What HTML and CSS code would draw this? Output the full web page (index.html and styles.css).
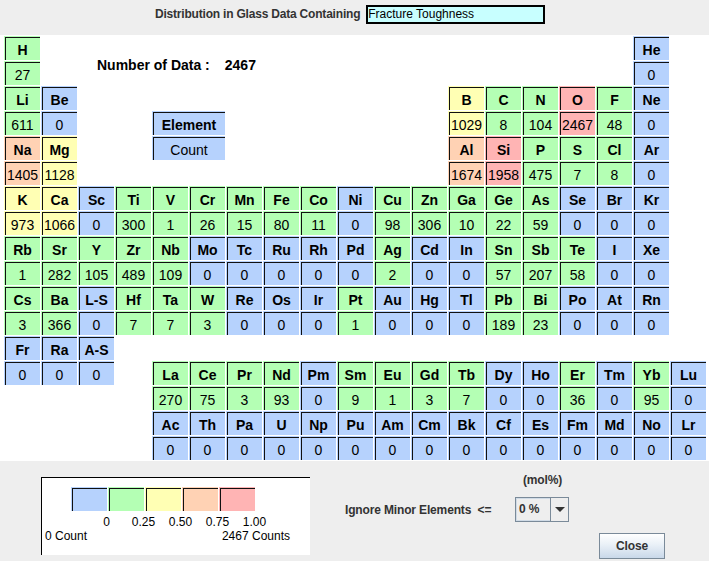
FILE: index.html
```html
<!DOCTYPE html>
<html>
<head>
<meta charset="utf-8">
<link rel="stylesheet" href="styles.css">
</head>
<body>
<div class="header">
  <span class="title">Distribution in Glass Data Containing</span>
  <div class="field">Fracture Toughness</div>
</div>

<div class="table">
  <div class="row">
    <div class="c el g">H</div>
    <div class="c el b at18">He</div>
  </div>
  <div class="row">
    <div class="c g">27</div>
    <div class="ndata">Number of Data :<span class="ndval">2467</span></div>
    <div class="c b at18">0</div>
  </div>
  <div class="row">
    <div class="c el g">Li</div>
    <div class="c el b">Be</div>
    <div class="c el y at13">B</div>
    <div class="c el g">C</div>
    <div class="c el g">N</div>
    <div class="c el r">O</div>
    <div class="c el g">F</div>
    <div class="c el b">Ne</div>
  </div>
  <div class="row">
    <div class="c g">611</div>
    <div class="c b">0</div>
    <div class="c el b key">Element</div>
    <div class="c y at13">1029</div>
    <div class="c g">8</div>
    <div class="c g">104</div>
    <div class="c r">2467</div>
    <div class="c g">48</div>
    <div class="c b">0</div>
  </div>
  <div class="row">
    <div class="c el o">Na</div>
    <div class="c el y">Mg</div>
    <div class="c b key">Count</div>
    <div class="c el o at13">Al</div>
    <div class="c el r">Si</div>
    <div class="c el g">P</div>
    <div class="c el g">S</div>
    <div class="c el g">Cl</div>
    <div class="c el b">Ar</div>
  </div>
  <div class="row">
    <div class="c o">1405</div>
    <div class="c y">1128</div>
    <div class="c o at13">1674</div>
    <div class="c r">1958</div>
    <div class="c g">475</div>
    <div class="c g">7</div>
    <div class="c g">8</div>
    <div class="c b">0</div>
  </div>
  <div class="row">
    <div class="c el y">K</div>
    <div class="c el y">Ca</div>
    <div class="c el b">Sc</div>
    <div class="c el g">Ti</div>
    <div class="c el g">V</div>
    <div class="c el g">Cr</div>
    <div class="c el g">Mn</div>
    <div class="c el g">Fe</div>
    <div class="c el g">Co</div>
    <div class="c el b">Ni</div>
    <div class="c el g">Cu</div>
    <div class="c el g">Zn</div>
    <div class="c el g">Ga</div>
    <div class="c el g">Ge</div>
    <div class="c el g">As</div>
    <div class="c el b">Se</div>
    <div class="c el b">Br</div>
    <div class="c el b">Kr</div>
  </div>
  <div class="row">
    <div class="c y">973</div>
    <div class="c y">1066</div>
    <div class="c b">0</div>
    <div class="c g">300</div>
    <div class="c g">1</div>
    <div class="c g">26</div>
    <div class="c g">15</div>
    <div class="c g">80</div>
    <div class="c g">11</div>
    <div class="c b">0</div>
    <div class="c g">98</div>
    <div class="c g">306</div>
    <div class="c g">10</div>
    <div class="c g">22</div>
    <div class="c g">59</div>
    <div class="c b">0</div>
    <div class="c b">0</div>
    <div class="c b">0</div>
  </div>
  <div class="row">
    <div class="c el g">Rb</div>
    <div class="c el g">Sr</div>
    <div class="c el g">Y</div>
    <div class="c el g">Zr</div>
    <div class="c el g">Nb</div>
    <div class="c el b">Mo</div>
    <div class="c el b">Tc</div>
    <div class="c el b">Ru</div>
    <div class="c el b">Rh</div>
    <div class="c el b">Pd</div>
    <div class="c el g">Ag</div>
    <div class="c el b">Cd</div>
    <div class="c el b">In</div>
    <div class="c el g">Sn</div>
    <div class="c el g">Sb</div>
    <div class="c el g">Te</div>
    <div class="c el b">I</div>
    <div class="c el b">Xe</div>
  </div>
  <div class="row">
    <div class="c g">1</div>
    <div class="c g">282</div>
    <div class="c g">105</div>
    <div class="c g">489</div>
    <div class="c g">109</div>
    <div class="c b">0</div>
    <div class="c b">0</div>
    <div class="c b">0</div>
    <div class="c b">0</div>
    <div class="c b">0</div>
    <div class="c g">2</div>
    <div class="c b">0</div>
    <div class="c b">0</div>
    <div class="c g">57</div>
    <div class="c g">207</div>
    <div class="c g">58</div>
    <div class="c b">0</div>
    <div class="c b">0</div>
  </div>
  <div class="row">
    <div class="c el g">Cs</div>
    <div class="c el g">Ba</div>
    <div class="c el b">L-S</div>
    <div class="c el g">Hf</div>
    <div class="c el g">Ta</div>
    <div class="c el g">W</div>
    <div class="c el b">Re</div>
    <div class="c el b">Os</div>
    <div class="c el b">Ir</div>
    <div class="c el g">Pt</div>
    <div class="c el b">Au</div>
    <div class="c el b">Hg</div>
    <div class="c el b">Tl</div>
    <div class="c el g">Pb</div>
    <div class="c el g">Bi</div>
    <div class="c el b">Po</div>
    <div class="c el b">At</div>
    <div class="c el b">Rn</div>
  </div>
  <div class="row">
    <div class="c g">3</div>
    <div class="c g">366</div>
    <div class="c b">0</div>
    <div class="c g">7</div>
    <div class="c g">7</div>
    <div class="c g">3</div>
    <div class="c b">0</div>
    <div class="c b">0</div>
    <div class="c b">0</div>
    <div class="c g">1</div>
    <div class="c b">0</div>
    <div class="c b">0</div>
    <div class="c b">0</div>
    <div class="c g">189</div>
    <div class="c g">23</div>
    <div class="c b">0</div>
    <div class="c b">0</div>
    <div class="c b">0</div>
  </div>
  <div class="row">
    <div class="c el b">Fr</div>
    <div class="c el b">Ra</div>
    <div class="c el b">A-S</div>
  </div>
  <div class="row">
    <div class="c b">0</div>
    <div class="c b">0</div>
    <div class="c b">0</div>
    <div class="c el g at5">La</div>
    <div class="c el g">Ce</div>
    <div class="c el g">Pr</div>
    <div class="c el g">Nd</div>
    <div class="c el b">Pm</div>
    <div class="c el g">Sm</div>
    <div class="c el g">Eu</div>
    <div class="c el g">Gd</div>
    <div class="c el g">Tb</div>
    <div class="c el b">Dy</div>
    <div class="c el b">Ho</div>
    <div class="c el g">Er</div>
    <div class="c el b">Tm</div>
    <div class="c el g">Yb</div>
    <div class="c el b">Lu</div>
  </div>
  <div class="row">
    <div class="c g at5">270</div>
    <div class="c g">75</div>
    <div class="c g">3</div>
    <div class="c g">93</div>
    <div class="c b">0</div>
    <div class="c g">9</div>
    <div class="c g">1</div>
    <div class="c g">3</div>
    <div class="c g">7</div>
    <div class="c b">0</div>
    <div class="c b">0</div>
    <div class="c g">36</div>
    <div class="c b">0</div>
    <div class="c g">95</div>
    <div class="c b">0</div>
  </div>
  <div class="row">
    <div class="c el b at5">Ac</div>
    <div class="c el b">Th</div>
    <div class="c el b">Pa</div>
    <div class="c el b">U</div>
    <div class="c el b">Np</div>
    <div class="c el b">Pu</div>
    <div class="c el b">Am</div>
    <div class="c el b">Cm</div>
    <div class="c el b">Bk</div>
    <div class="c el b">Cf</div>
    <div class="c el b">Es</div>
    <div class="c el b">Fm</div>
    <div class="c el b">Md</div>
    <div class="c el b">No</div>
    <div class="c el b">Lr</div>
  </div>
  <div class="row">
    <div class="c b at5">0</div>
    <div class="c b">0</div>
    <div class="c b">0</div>
    <div class="c b">0</div>
    <div class="c b">0</div>
    <div class="c b">0</div>
    <div class="c b">0</div>
    <div class="c b">0</div>
    <div class="c b">0</div>
    <div class="c b">0</div>
    <div class="c b">0</div>
    <div class="c b">0</div>
    <div class="c b">0</div>
    <div class="c b">0</div>
    <div class="c b">0</div>
  </div>
</div>

<div class="footer">
  <div class="legend">
    <div class="swatches">
      <div class="sw b"></div>
      <div class="sw g"></div>
      <div class="sw y"></div>
      <div class="sw o"></div>
      <div class="sw r"></div>
    </div>
    <div class="ticks">
      <span>0</span><span>0.25</span><span>0.50</span><span>0.75</span><span>1.00</span>
    </div>
    <div class="ends">
      <span>0 Count</span><span>2467 Counts</span>
    </div>
  </div>
  <div class="controls">
    <div class="mol">(mol%)</div>
    <div class="ignore">
      <span class="ig-label">Ignore Minor Elements&nbsp;&nbsp;&lt;=</span>
      <div class="combo">
        <div class="combo-text">0 %</div>
        <div class="combo-btn"><span class="tri"></span></div>
      </div>
    </div>
    <div class="close">Close</div>
  </div>
</div>
</body>
</html>
```
FILE: styles.css
```css
* { box-sizing: border-box; }

body {
  margin: 0;
  width: 709px;
  height: 561px;
  overflow: hidden;
  background: #eeeeee;
  font-family: "Liberation Sans", Arial, sans-serif;
  color: #000;
}

/* header */
.header {
  height: 35px;
  display: flex;
  align-items: flex-start;
  padding: 5px 0 0 155px;
}
.title {
  font-weight: bold;
  font-size: 12px;
  line-height: 18px;
  letter-spacing: -0.2px;
  color: #333;
}
.field {
  margin-left: 6px;
  width: 179px;
  height: 19px;
  border: 2px solid #000;
  background: #c8ffff;
  font-size: 12px;
  line-height: 15px;
  padding-left: 0;
}

/* table */
.table {
  background: #fff;
  height: 426px;
  padding: 1px 0 0 4px;
}
.row {
  display: grid;
  grid-template-columns: repeat(19, 36px);
  grid-template-rows: 24px;
  column-gap: 1px;
  height: 24px;
  margin-bottom: 1px;
}
.c {
  height: 24px;
  text-align: center;
  font-size: 14px;
  line-height: 19px;
  padding-top: 5px;
  padding-left: 1px;
  white-space: nowrap;
  background: var(--bg);
  box-shadow: inset 1px 1px 0 var(--bg), inset 2px 2px 0 #111;
}
.el { font-weight: bold; }

.b { --bg: #b6d2fd; }
.g { --bg: #b4ffb4; }
.y { --bg: #ffffb4; }
.o { --bg: #ffd2b4; }
.r { --bg: #ffb4b4; }

.at5 { grid-column-start: 5; }
.at13 { grid-column-start: 13; }
.at18 { grid-column-start: 18; }

.key { grid-column: 5 / span 2; }

.ndata {
  grid-column: 3 / span 10;
  padding-left: 19px;
  margin-top: -4px;
  font-weight: bold;
  font-size: 14px;
  line-height: 16px;
  white-space: nowrap;
}
.ndval { margin-left: 15px; }

/* footer */
.footer {
  height: 100px;
  display: flex;
  align-items: flex-start;
}
.legend {
  margin: 16px 0 0 41px;
  width: 269px;
  height: 78px;
  background: #fff;
  border-top: 1px solid #000;
  border-left: 1px solid #000;
  padding-top: 9px;
}
.swatches {
  display: flex;
  gap: 1px;
  padding-left: 29px;
}
.sw {
  width: 36px;
  height: 24px;
  background: var(--bg);
  box-shadow: inset 1px 1px 0 var(--bg), inset 2px 2px 0 #111;
}
.ticks {
  display: flex;
  padding-left: 46px;
  margin-top: 6px;
  font-size: 12px;
  line-height: 11px;
}
.ticks span {
  width: 37px;
  text-align: center;
}
.ends {
  display: flex;
  justify-content: space-between;
  margin-top: 3px;
  padding: 0 20px 0 3px;
  font-size: 12px;
  line-height: 11px;
}

.controls {
  margin-left: 35px;
  font-size: 12px;
  font-weight: bold;
  color: #333;
  letter-spacing: -0.15px;
}
.mol {
  margin-top: 12px;
  padding-left: 178px;
  line-height: 14px;
}
.ignore {
  margin-top: 10px;
  display: flex;
  align-items: center;
}
.ig-label {
  width: 170px;
  white-space: nowrap;
}
.combo {
  width: 54px;
  height: 25px;
  border: 1px solid #7a8a99;
  display: flex;
  background: #eeeeee;
}
.combo-text {
  width: 34px;
  height: 23px;
  line-height: 21px;
  padding-left: 2px;
  border: 1px solid #d0dbe6;
  border-right: none;
  color: #333;
}
.combo-btn {
  flex: 1;
  border-left: 1px solid #7a8a99;
  display: flex;
  align-items: center;
  justify-content: center;
}
.tri {
  width: 0;
  height: 0;
  border-left: 5px solid transparent;
  border-right: 5px solid transparent;
  border-top: 5px solid #333;
}
.close {
  margin: 11px 0 0 254px;
  width: 66px;
  height: 26px;
  border: 1px solid #7a8a99;
  background: linear-gradient(#ffffff, #e9f0f7 45%, #c9d8e9);
  text-align: center;
  line-height: 24px;
  color: #333;
}
```
